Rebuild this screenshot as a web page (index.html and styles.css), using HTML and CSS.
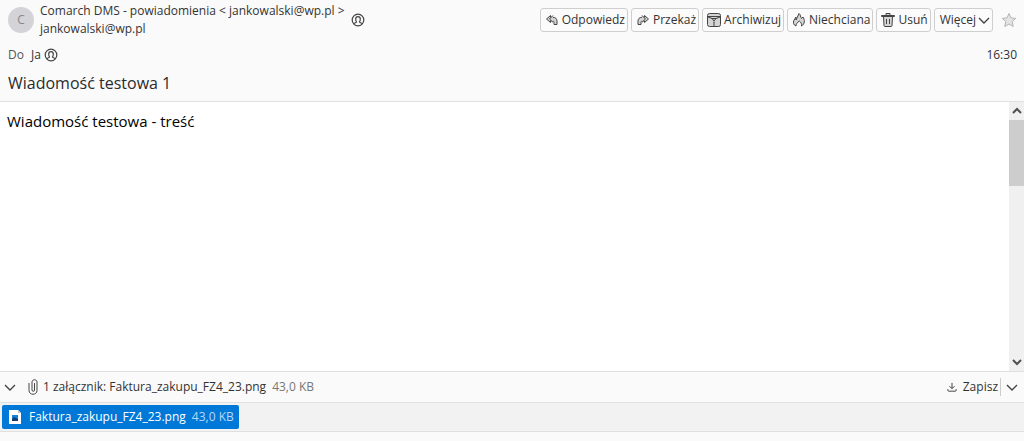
FILE: index.html
```html
<!DOCTYPE html>
<html lang="pl">
<head>
    <meta charset="UTF-8">
    <meta name="viewport" content="width=device-width, initial-scale=1.0">
    <title>Wiadomość testowa 1</title>
    <link rel="stylesheet" href="styles.css">
</head>
<body>
    <header class="header">
        <div class="header-top">
            <div class="avatar">C</div>
            <div class="sender">
                <div class="sender-name">Comarch DMS - powiadomienia <a href="mailto:jankowalski@wp.pl">&lt; jankowalski@wp.pl &gt;</a></div>
                <div class="sender-mail">jankowalski@wp.pl</div>
            </div>
            <svg class="contact" viewBox="0 0 14 14">
                <circle cx="7" cy="7" r="5.8"/>
                <path d="M3 11c.2-1.400 2.500-1 2.500-2.200C4.900 8 4.700 7 4.700 6c0-1.400.9-2.300 2.300-2.300S9.300 4.600 9.300 6c0 1-.2 2-.8 2.800C8.500 10 10.800 9.600 11 11"/>
            </svg>
            <div class="actions">
                <button type="button">
                    <svg viewBox="0 0 16 16"><path d="M6.500 3.500 2.500 7l4 3.500V8.800H8c1.500 0 2 .7 2 1.700v2h3V9.200C13 6.800 11.500 5.300 9 5.300H6.500z"/><path d="M9 3.500 5.500 7 9 10.300"/></svg>
                    Odpowiedz
                </button>
                <button type="button">
                    <svg viewBox="0 0 16 16"><path d="m9.500 3.500 4 3.500-4 3.500V8.800H8c-1.500 0-2 .7-2 1.700v2H3V9.200c0-2.400 1.500-3.900 4-3.900h2.500z"/><path d="M7 3.500 10.500 7 7 10.300"/></svg>
                    Przekaż
                </button>
                <button type="button">
                    <svg viewBox="0 0 16 16"><rect x="1.500" y="1.500" width="13" height="13" rx="2"/><path d="M1.500 4.500h13M2 5l4 1.500 2 2.500 2-2.500L14 5M6 6.500h4M8 9.500v1M7 11h2M8 12v2"/></svg>
                    Archiwizuj
                </button>
                <button type="button">
                    <svg viewBox="0 0 16 16"><path d="M5 14C2.500 13 2 10.500 2.800 8.500L5 5v3l3-6.500c1.800 1.300 1.300 3.500 2.500 5L12 5c2 3 2 7-1.500 9 .3-2-.2-3.500-2.200-5C6.500 10.500 4.800 12 5 14z"/></svg>
                    Niechciana
                </button>
                <button type="button">
                    <svg viewBox="0 0 16 16"><path d="M3.500 4.500h9l-.5 9c0 .6-.4 1-1 1H5c-.6 0-1-.4-1-1zM1.500 4.500v-1h13v1zM6 3.500v-2h4v2M6.500 7v5M9.500 7v5"/></svg>
                    Usuń
                </button>
                <button type="button" class="more">
                    Więcej
                    <svg class="chevron" viewBox="0 0 12 12"><path d="m1 4 5 5 5-5"/></svg>
                </button>
            </div>
            <svg class="star" viewBox="0 0 16 16"><path d="m8 1.500 2 4.400 4.700.5-3.500 3.200 1 4.900L8 12l-4.200 2.500 1-4.900L1.300 6.400 6 5.900z"/></svg>
        </div>
        <div class="header-to">
            <span class="label">Do</span>
            <span>Ja</span>
            <svg class="contact" viewBox="0 0 14 14">
                <circle cx="7" cy="7" r="5.8"/>
                <path d="M3 11c.2-1.400 2.500-1 2.500-2.200C4.900 8 4.700 7 4.700 6c0-1.400.9-2.300 2.300-2.300S9.300 4.600 9.300 6c0 1-.2 2-.8 2.800C8.500 10 10.800 9.600 11 11"/>
            </svg>
            <time>16:30</time>
        </div>
        <h1>Wiadomość testowa 1</h1>
    </header>

    <main class="message">
        <p>Wiadomość testowa - treść</p>
        <div class="scrollbar">
            <svg viewBox="0 0 15 18"><path d="M4 11 8 7l4 4"/></svg>
            <div class="thumb"></div>
            <svg class="down" viewBox="0 0 15 18"><path d="m4 7 4 4 4-4"/></svg>
        </div>
    </main>

    <section class="attachments">
        <div class="attachments-bar">
            <svg class="chevron" viewBox="0 0 12 12"><path d="m1 4 5 5 5-5"/></svg>
            <svg class="clip" viewBox="0 0 10 16"><path d="M6.500 4v7c0 1.800-2.500 1.800-2.500 0V3c0-3 5-3 5 0v8.500c0 5-8 5-8 0V4"/></svg>
            <span>1 załącznik: Faktura_zakupu_FZ4_23.png</span>
            <span class="size">43,0 KB</span>
            <button type="button" class="save">
                <svg viewBox="0 0 12 12"><path d="M6 1v7M3 5l3 3 3-3M1 8.500V10c0 .6.400 1 1 1h8c.6 0 1-.4 1-1V8.500"/></svg>
                Zapisz
            </button>
            <button type="button" class="save-menu" aria-label="Więcej opcji zapisu">
                <svg class="chevron" viewBox="0 0 12 12"><path d="m1 4 5 5 5-5"/></svg>
            </button>
        </div>
        <div class="attachments-list">
            <a class="file" href="#">
                <svg viewBox="0 0 12 14"><path fill="#fff" d="M0 0h9l3 3v11H0z"/><path fill="#c8c8c8" d="M9 0v3h3z"/><path fill="#1683d8" d="M3 5h6v6H3z"/><path fill="#103f78" d="m3 9 2-2 4 2v2H3z"/></svg>
                <span>Faktura_zakupu_FZ4_23.png</span>
                <span class="size">43,0 KB</span>
            </a>
        </div>
    </section>
    <footer class="status"></footer>
</body>
</html>
```

FILE: styles.css
```css
* {
    margin: 0;
    padding: 0;
    box-sizing: border-box;
}

body {
    display: flex;
    flex-direction: column;
    min-height: 100vh;
    background: #fafafa;
    color: #333;
    font-family: "Segoe UI", "Open Sans", sans-serif;
    font-size: 12px;
    line-height: 18px;
}

svg {
    flex: none;
    fill: none;
    stroke: #444;
}

a {
    color: inherit;
    text-decoration: none;
}

button {
    display: flex;
    align-items: center;
    font: inherit;
    color: inherit;
    background: none;
    border: none;
    white-space: nowrap;
}

.chevron {
    width: 12px;
    height: 12px;
    stroke-width: 1.4;
}

/* Header */
.header {
    padding: 2px 7px 0 8px;
    border-bottom: 1px solid #e0e0e0;
}

.header-top {
    display: flex;
    align-items: center;
    height: 36px;
}

.avatar {
    width: 26px;
    height: 26px;
    margin-right: 6px;
    border-radius: 50%;
    background: #d3d3d8;
    color: #88888c;
    line-height: 26px;
    text-align: center;
}

.sender {
    white-space: nowrap;
}

.contact {
    width: 14px;
    height: 14px;
    stroke-width: 1.2;
}

.sender + .contact {
    margin-left: 6px;
}

.actions {
    display: flex;
    gap: 3px;
    margin-left: auto;
}

.actions button {
    gap: 2px;
    height: 24px;
    padding: 0 2px 0 3px;
    background: #fbfbfb;
    border: 1px solid #cfcfcf;
    border-radius: 3px;
}

.actions button svg:not(.chevron) {
    width: 16px;
    height: 16px;
    fill: #d4d4d4;
}

.actions .more {
    padding-left: 5px;
}

.star {
    width: 16px;
    height: 16px;
    margin-left: 8px;
    fill: #e4e4e4;
    stroke: #b4b4b4;
}

.header-to {
    display: flex;
    align-items: center;
    height: 34px;
}

.label {
    margin-right: 7px;
    color: #555;
}

.header-to .contact {
    margin-left: 3px;
}

time {
    margin-left: auto;
}

h1 {
    height: 29px;
    font-size: 16px;
    font-weight: normal;
    line-height: 22px;
    color: #2b2b2b;
}

/* Message */
.message {
    display: flex;
    flex: 1;
    justify-content: space-between;
    background: #fff;
    color: #000;
}

.message p {
    padding: 8px 7px;
    font-size: 15px;
    line-height: 22px;
}

.scrollbar {
    display: flex;
    flex-direction: column;
    width: 15px;
    background: #f0f0f0;
}

.scrollbar svg {
    width: 15px;
    height: 18px;
    stroke: #505050;
    stroke-width: 2;
}

.scrollbar .down {
    margin-top: auto;
}

.thumb {
    height: 66px;
    background: #cdcdcd;
}

/* Attachments */
.attachments-bar {
    display: flex;
    align-items: center;
    height: 31px;
    padding: 0 6px 0 4px;
    border-top: 1px solid #e0e0e0;
}

.clip {
    width: 10px;
    height: 16px;
    margin: 0 5px 0 12px;
}

.size {
    margin-left: 6px;
    color: #777;
}

.save {
    gap: 6px;
    height: 18px;
    margin-left: auto;
    padding-right: 2px;
    border-right: 1px solid #ccc;
}

.save svg {
    width: 10px;
    height: 12px;
    stroke-width: 1.2;
}

.save-menu {
    padding-left: 5px;
}

.attachments-list {
    height: 30px;
    padding: 2px;
    background: #f2f2f2;
    border-top: 1px solid #e0e0e0;
    border-bottom: 1px solid #e0e0e0;
}

.file {
    display: inline-flex;
    align-items: center;
    height: 24px;
    padding: 0 5px 0 7px;
    border-radius: 2px;
    background: #0078d7;
    color: #fff;
}

.file svg {
    width: 12px;
    height: 14px;
    margin-right: 8px;
    stroke: none;
}

.file .size {
    color: #b8d8f4;
}

.status {
    height: 9px;
}
```
